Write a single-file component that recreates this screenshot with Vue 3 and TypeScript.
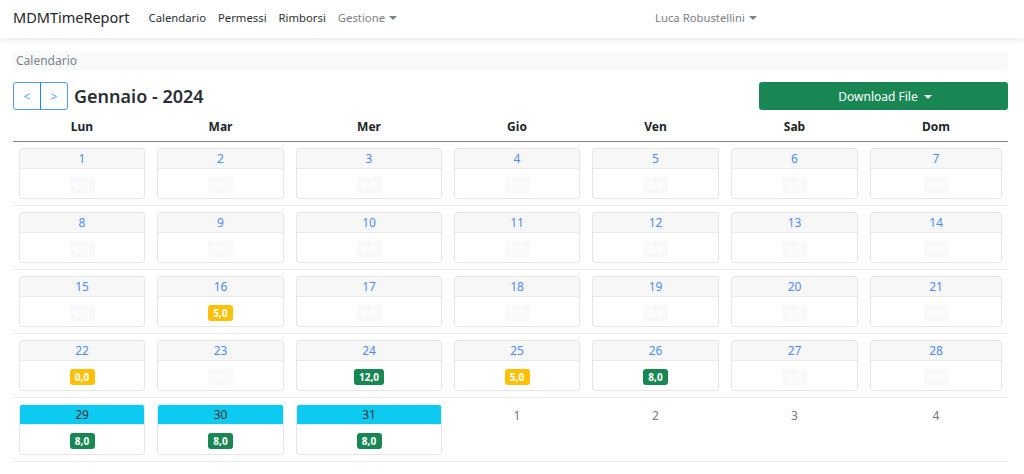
<script setup lang="ts">
interface Day {
  n: number
  hours: string
  tone: string
  today?: boolean
}

const days = (from: number, to: number, special: Record<number, [string, string]> = {}): Day[] => {
  const out: Day[] = []
  for (let n = from; n <= to; n++) {
    const s = special[n]
    out.push({ n, hours: s ? s[0] : '0,0', tone: s ? s[1] : 'empty' })
  }
  return out
}

const header = ['Lun', 'Mar', 'Mer', 'Gio', 'Ven', 'Sab', 'Dom']

const weeks: Day[][] = [
  days(1, 7),
  days(8, 14),
  days(15, 21, { 16: ['5,0', 'warn'] }),
  days(22, 28, { 22: ['0,0', 'warn'], 24: ['12,0', 'ok'], 25: ['5,0', 'warn'], 26: ['8,0', 'ok'] }),
]

const lastWeek: Day[] = [
  { n: 29, hours: '8,0', tone: 'ok', today: true },
  { n: 30, hours: '8,0', tone: 'ok', today: true },
  { n: 31, hours: '8,0', tone: 'ok', today: true },
]
const nextMonth = [1, 2, 3, 4]
</script>

<template>
  <div class="page">
    <nav class="navbar">
      <span class="brand">MDMTimeReport</span>
      <a class="link">Calendario</a>
      <a class="link">Permessi</a>
      <a class="link">Rimborsi</a>
      <a class="link muted caret">Gestione</a>
      <a class="link muted caret user">Luca Robustellini</a>
    </nav>

    <main class="content">
      <div class="crumb">Calendario</div>

      <div class="toolbar">
        <div class="pager">
          <button class="page-btn">&lt;</button>
          <button class="page-btn">&gt;</button>
        </div>
        <h1 class="title">Gennaio - 2024</h1>
        <button class="download caret">Download File</button>
      </div>

      <div class="week head">
        <div v-for="h in header" :key="h" class="head-cell">{{ h }}</div>
      </div>

      <div v-for="(week, i) in weeks" :key="i" class="week">
        <div v-for="d in week" :key="d.n" class="cell">
          <div class="card">
            <div class="card-head">{{ d.n }}</div>
            <div class="card-body"><span class="badge" :class="d.tone">{{ d.hours }}</span></div>
          </div>
        </div>
      </div>

      <div class="week">
        <div v-for="d in lastWeek" :key="d.n" class="cell">
          <div class="card">
            <div class="card-head today">{{ d.n }}</div>
            <div class="card-body"><span class="badge" :class="d.tone">{{ d.hours }}</span></div>
          </div>
        </div>
        <div v-for="n in nextMonth" :key="'next' + n" class="cell other">{{ n }}</div>
      </div>
    </main>
  </div>
</template>

<style>
html,
body {
  margin: 0;
  background: #fff;
}
</style>

<style scoped>
.page {
  width: 1024px;
  height: 474px;
  overflow: hidden;
  font-family: "Noto Sans", "Open Sans", sans-serif;
  font-size: 12px;
  color: #212529;
}

.navbar {
  height: 38px;
  box-sizing: border-box;
  padding: 0 13px 4px;
  display: flex;
  align-items: center;
  background: #fff;
  box-shadow: 0 2px 6px rgba(0, 0, 0, 0.09);
}

.brand {
  font-size: 14.5px;
  margin-right: 19px;
}

.link {
  font-size: 11.3px;
  margin-right: 12px;
  color: #2b2f33;
}

.muted {
  color: #7d8186;
}

.user {
  margin-left: 246px;
}

.caret::after {
  content: "";
  display: inline-block;
  margin-left: 4px;
  vertical-align: 2px;
  border-top: 4px solid currentColor;
  border-left: 4px solid transparent;
  border-right: 4px solid transparent;
}

.content {
  padding: 13px 16px 0 13px;
}

.crumb {
  height: 19px;
  line-height: 19px;
  padding-left: 3px;
  background: #f8f9fa;
  border-radius: 4px;
  color: #7d8389;
}

.toolbar {
  display: flex;
  align-items: center;
  margin-top: 12px;
  height: 28px;
}

.pager {
  display: flex;
  width: 55px;
  height: 28px;
}

.page-btn {
  flex: 1;
  padding: 0;
  background: #fff;
  border: 1px solid #0d6efd;
  color: #0d6efd;
  font-family: inherit;
  font-size: 12px;
  opacity: 0.7;
}

.page-btn:first-child {
  border-radius: 3px 0 0 3px;
}

.page-btn:last-child {
  margin-left: -1px;
  border-radius: 0 3px 3px 0;
}

.title {
  margin: 0 0 0 6px;
  font-size: 18px;
  font-weight: 600;
  color: #2b2f33;
}

.download {
  margin-left: auto;
  width: 249px;
  height: 28px;
  padding: 0 0 0 3px;
  border: 0;
  border-radius: 3px;
  background: #198754;
  color: #fff;
  font-family: inherit;
  font-size: 12px;
}

.download::after {
  margin-left: 6px;
}

.week {
  display: grid;
  grid-template-columns: 138px 139px 158px 138px 139px 139px 144px;
  height: 64.1px;
  box-sizing: border-box;
  border-bottom: 1px solid #e9ebee;
}

.head {
  height: 26px;
  margin-top: 6px;
  border-bottom: 1px solid #7f8387;
}

.head-cell {
  text-align: center;
  font-weight: 700;
  line-height: 21px;
}

.cell {
  padding: 6px 6px 0;
}

.card {
  height: 51px;
  box-sizing: border-box;
  border: 1px solid #e3e5e8;
  border-radius: 3px;
  overflow: hidden;
}

.card-head {
  height: 20px;
  line-height: 19px;
  text-align: center;
  background: #f7f7f7;
  border-bottom: 1px solid #e8e9ea;
  color: #4d8bfd;
  box-sizing: border-box;
}

.card-head.today {
  background: #0dcaf0;
  color: #2b2f33;
}

.card-body {
  display: flex;
  justify-content: center;
  padding-top: 8px;
}

.badge {
  min-width: 15px;
  height: 16px;
  line-height: 16px;
  padding: 0 5px;
  border-radius: 3px;
  text-align: center;
  font-size: 10px;
  font-weight: 700;
  color: #fff;
}

.empty {
  background: #f8f9fa;
}

.warn {
  background: #ffc107;
}

.ok {
  background: #198754;
}

.other {
  text-align: center;
  color: #757b81;
  padding-top: 9px;
}
</style>
